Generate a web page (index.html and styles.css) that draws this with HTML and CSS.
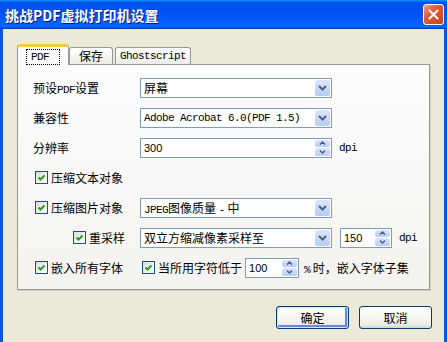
FILE: index.html
```html
<!DOCTYPE html>
<html lang="zh-CN">
<head>
  <meta charset="UTF-8">
  <title>挑战PDF虚拟打印机设置</title>
  <link rel="stylesheet" href="styles.css">
</head>
<body>
  <div class="window">
    <div class="titlebar">
      <span class="title">挑战PDF虚拟打印机设置</span>
      <button class="close" aria-label="关闭">
        <svg width="11" height="11" viewBox="0 0 11 11"><path d="M1.5 1.5 L9.5 9.5 M9.5 1.5 L1.5 9.5" stroke="#fff" stroke-width="2" stroke-linecap="round"/></svg>
      </button>
    </div>

    <div class="client">
      <div class="tabs">
        <div class="tab active"><span class="focus en">PDF</span></div>
        <div class="tab">保存</div>
        <div class="tab gs"><span class="en">Ghostscript</span></div>
      </div>

      <div class="panel">
        <div class="row">
          <div class="label">预设<span class="en">PDF</span>设置</div>
          <div class="combo">
            <span class="value">屏幕</span>
            <span class="arrow"><svg width="9" height="6" viewBox="0 0 9 6"><path d="M1 1 L4.5 4.5 L8 1" fill="none" stroke="#4D6185" stroke-width="2"/></svg></span>
          </div>
        </div>

        <div class="row">
          <div class="label">兼容性</div>
          <div class="combo">
            <span class="value en">Adobe Acrobat 6.0(PDF 1.5)</span>
            <span class="arrow"><svg width="9" height="6" viewBox="0 0 9 6"><path d="M1 1 L4.5 4.5 L8 1" fill="none" stroke="#4D6185" stroke-width="2"/></svg></span>
          </div>
        </div>

        <div class="row">
          <div class="label">分辨率</div>
          <div class="spin">
            <span class="value num">300</span>
            <span class="btns">
              <span class="half"><svg width="7" height="4" viewBox="0 0 7 4"><path d="M1 3.5 L3.5 1 L6 3.5" fill="none" stroke="#4D6185" stroke-width="1.5"/></svg></span>
              <span class="half"><svg width="7" height="4" viewBox="0 0 7 4"><path d="M1 0.5 L3.5 3 L6 0.5" fill="none" stroke="#4D6185" stroke-width="1.5"/></svg></span>
            </span>
          </div>
          <span class="unit en">dpi</span>
        </div>

        <div class="row">
          <label class="check">
            <span class="box"><svg width="9" height="9" viewBox="0 0 9 9"><path d="M1.5 4.5 L3.5 6.5 L7.5 2.5" fill="none" stroke="#21A121" stroke-width="2"/></svg></span>
            压缩文本对象
          </label>
        </div>

        <div class="row">
          <div class="label">
            <label class="check">
              <span class="box"><svg width="9" height="9" viewBox="0 0 9 9"><path d="M1.5 4.5 L3.5 6.5 L7.5 2.5" fill="none" stroke="#21A121" stroke-width="2"/></svg></span>
              压缩图片对象
            </label>
          </div>
          <div class="combo">
            <span class="value"><span class="en">JPEG</span>图像质量 <span class="en">-</span> 中</span>
            <span class="arrow"><svg width="9" height="6" viewBox="0 0 9 6"><path d="M1 1 L4.5 4.5 L8 1" fill="none" stroke="#4D6185" stroke-width="2"/></svg></span>
          </div>
        </div>

        <div class="row">
          <div class="label indent">
            <label class="check">
              <span class="box"><svg width="9" height="9" viewBox="0 0 9 9"><path d="M1.5 4.5 L3.5 6.5 L7.5 2.5" fill="none" stroke="#21A121" stroke-width="2"/></svg></span>
              重采样
            </label>
          </div>
          <div class="combo">
            <span class="value">双立方缩减像素采样至</span>
            <span class="arrow"><svg width="9" height="6" viewBox="0 0 9 6"><path d="M1 1 L4.5 4.5 L8 1" fill="none" stroke="#4D6185" stroke-width="2"/></svg></span>
          </div>
          <div class="spin small">
            <span class="value num">150</span>
            <span class="btns">
              <span class="half"><svg width="7" height="4" viewBox="0 0 7 4"><path d="M1 3.5 L3.5 1 L6 3.5" fill="none" stroke="#4D6185" stroke-width="1.5"/></svg></span>
              <span class="half"><svg width="7" height="4" viewBox="0 0 7 4"><path d="M1 0.5 L3.5 3 L6 0.5" fill="none" stroke="#4D6185" stroke-width="1.5"/></svg></span>
            </span>
          </div>
          <span class="unit en">dpi</span>
        </div>

        <div class="row">
          <div class="label">
            <label class="check">
              <span class="box"><svg width="9" height="9" viewBox="0 0 9 9"><path d="M1.5 4.5 L3.5 6.5 L7.5 2.5" fill="none" stroke="#21A121" stroke-width="2"/></svg></span>
              嵌入所有字体
            </label>
          </div>
          <label class="check">
            <span class="box"><svg width="9" height="9" viewBox="0 0 9 9"><path d="M1.5 4.5 L3.5 6.5 L7.5 2.5" fill="none" stroke="#21A121" stroke-width="2"/></svg></span>
            当所用字符低于
          </label>
          <div class="spin pct">
            <span class="value num">100</span>
            <span class="btns">
              <span class="half"><svg width="7" height="4" viewBox="0 0 7 4"><path d="M1 3.5 L3.5 1 L6 3.5" fill="none" stroke="#4D6185" stroke-width="1.5"/></svg></span>
              <span class="half"><svg width="7" height="4" viewBox="0 0 7 4"><path d="M1 0.5 L3.5 3 L6 0.5" fill="none" stroke="#4D6185" stroke-width="1.5"/></svg></span>
            </span>
          </div>
          <span class="after"><span class="en">%</span> 时，嵌入字体子集</span>
        </div>
      </div>

      <div class="actions">
        <button class="btn default">确定</button>
        <button class="btn">取消</button>
      </div>
    </div>
  </div>
</body>
</html>
```

FILE: styles.css
```css
body {
  margin: 0;
  font-family: "Noto Sans CJK SC", sans-serif;
  font-size: 12px;
  color: #000;
  background: #ECE9D8;
}

.window {
  height: 342px;
  display: flex;
  flex-direction: column;
}

.titlebar {
  height: 29px;
  box-sizing: border-box;
  display: flex;
  align-items: center;
  justify-content: space-between;
  padding: 0 3px 0 5px;
  background: linear-gradient(180deg, #0997ff, #0053ee 8%, #0050ee 40%, #0066ff 88%, #0066ff 93%, #005bff 95%, #003dd7 96%, #003dd7);
}

.title {
  color: #fff;
  font-weight: bold;
  font-size: 14px;
  text-shadow: 1px 1px #0a1883;
}

.close {
  width: 21px;
  height: 21px;
  padding: 0;
  border: 1px solid #fff;
  border-radius: 3px;
  background: linear-gradient(135deg, #f0a48a 0%, #e0603a 35%, #c8411d 100%);
  display: flex;
  align-items: center;
  justify-content: center;
}

.client {
  flex: 1;
  background: #ECE9D8;
  border-left: 3px solid #0b56e3;
  border-right: 3px solid #0b56e3;
  padding: 15px 14px 0;
}

.en {
  font-family: "Liberation Mono", monospace;
  font-size: 11px;
  letter-spacing: -0.6px;
}

.num {
  font-family: "Liberation Sans", sans-serif;
  font-size: 11px;
}

/* tabs */
.tabs {
  position: relative;
  z-index: 1;
  display: flex;
  align-items: flex-end;
  height: 21px;
  margin-bottom: -1px;
}

.tab {
  height: 17px;
  box-sizing: border-box;
  margin-bottom: 1px;
  width: 44px;
  border: 1px solid #919b9c;
  border-bottom: none;
  border-radius: 3px 3px 0 0;
  background: linear-gradient(#fff, #ecebe6);
  display: flex;
  align-items: center;
  justify-content: center;
  line-height: 1;
}

.tab.active {
  width: 52px;
  height: 21px;
  margin-bottom: 0;
  border-top: 3px solid #ffc83c;
  background: #fcfcfe;
  padding-top: 1px;
}

.tab.gs {
  width: 76px;
  margin-left: 2px;
}

.focus {
  border: 1px dotted #000;
  padding: 2px 10px 1px 4px;
}

/* panel */
.panel {
  height: 226px;
  box-sizing: border-box;
  border: 1px solid #919b9c;
  box-shadow: 1px 1px 0 #d0cebf;
  background: linear-gradient(#fcfcfe, #f4f3ee);
  padding: 12px 15px 0;
  display: flex;
  flex-direction: column;
  gap: 9px;
}

.row {
  display: flex;
  align-items: center;
  height: 21px;
}

.label {
  width: 107px;
  flex: none;
}

.label.indent {
  padding-left: 38px;
  box-sizing: border-box;
}

.check {
  display: flex;
  align-items: center;
  gap: 3px;
  margin-left: 2px;
}

.box {
  width: 13px;
  height: 13px;
  box-sizing: border-box;
  border: 1px solid #1c5180;
  background: linear-gradient(135deg, #dcdcd7, #fff);
  display: flex;
  align-items: center;
  justify-content: center;
}

.combo,
.spin {
  width: 192px;
  height: 20px;
  box-sizing: border-box;
  border: 1px solid #7f9db9;
  background: #fff;
  display: flex;
  align-items: center;
  padding-left: 3px;
  flex: none;
}

.value {
  flex: 1;
  white-space: nowrap;
}

.arrow {
  width: 15px;
  height: 16px;
  margin-right: 1px;
  border-radius: 2px;
  background: linear-gradient(#dce6fd, #b6cbf9);
  display: flex;
  align-items: center;
  justify-content: center;
}

.btns {
  width: 15px;
  height: 16px;
  margin-right: 1px;
  display: flex;
  flex-direction: column;
  gap: 1px;
}

.half {
  flex: 1;
  border-radius: 2px;
  background: linear-gradient(#dce6fd, #b6cbf9);
  display: flex;
  align-items: center;
  justify-content: center;
}

.spin.small {
  width: 52px;
  margin-left: 8px;
}

.spin.pct {
  width: 54px;
  margin-left: 3px;
}

.unit {
  margin-left: 7px;
}

.after {
  margin-left: 5px;
}

/* buttons */
.actions {
  display: flex;
  justify-content: flex-end;
  gap: 10px;
  margin-top: 16px;
  margin-right: -2px;
}

.btn {
  width: 73px;
  height: 23px;
  padding: 0;
  border: 1px solid #003c74;
  border-radius: 3px;
  background: linear-gradient(#fff, #f4f3ee 60%, #ecebe6 86%, #d6d0c5);
  font-family: "Noto Sans CJK SC", sans-serif;
  font-size: 12px;
  color: #000;
}

.btn.default {
  box-shadow: inset 0 0 0 1px #cee7ff, inset -1px -1px 0 2px #6982ee;
}
```
